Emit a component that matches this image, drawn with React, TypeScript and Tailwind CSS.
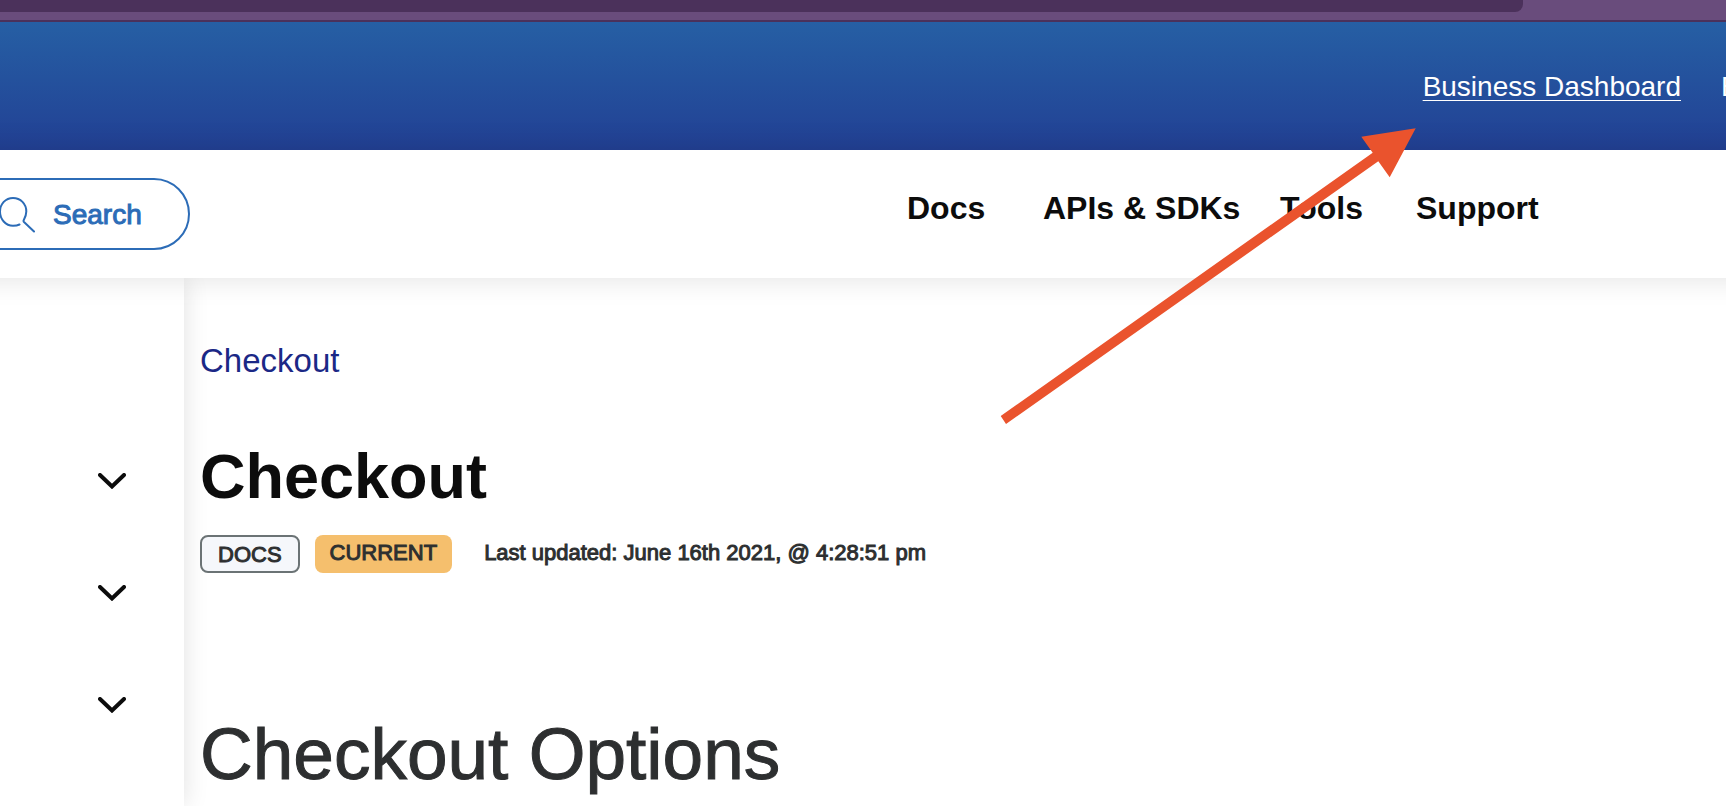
import React from 'react';

interface NavItem {
  label: string;
  width: string;
}

const navItems: NavItem[] = [
  { label: 'Docs', width: 'w-[136px]' },
  { label: 'APIs & SDKs', width: 'w-[237px]' },
  { label: 'Tools', width: 'w-[136px]' },
  { label: 'Support', width: 'w-[124px]' },
];

const sections = ['Section one', 'Section two', 'Section three'];

function SearchIcon() {
  return (
    <svg
      width="36"
      height="38"
      viewBox="0 0 36 38"
      fill="none"
      stroke="currentColor"
      strokeWidth="2"
      strokeLinecap="round"
      strokeLinejoin="round"
      className="shrink-0 overflow-visible"
      aria-hidden="true"
    >
      <path d="M18.5 28.5C16.7 29.4 14.5 29.8 12 29.8C4.5 29.8 -1 23 -1 15.7C-1 7.9 4.6 2 12 2C19.6 2 25.3 7.9 25.3 15.5C25.3 19 24.2 21.5 22.7 24.2C22.4 25 22.5 25.5 23 26L33 35.5" />
    </svg>
  );
}

function Chevron() {
  return (
    <svg
      width="28"
      height="16"
      viewBox="0 0 28 16"
      fill="none"
      stroke="currentColor"
      strokeWidth="4"
      strokeLinecap="round"
      aria-hidden="true"
    >
      <path d="M2 2L14 13.5L26 2" />
    </svg>
  );
}

function Arrow() {
  return (
    <svg
      width="416"
      height="297"
      viewBox="0 0 416 297"
      className="absolute left-[1000px] top-[128px] z-20 pointer-events-none"
      aria-hidden="true"
    >
      <path
        d="M0.7 288L372.7 24.7L361.3 8.7L415.7 0.3L389.7 49.3L378.3 33.3L6 296Z"
        fill="#ea532d"
      />
    </svg>
  );
}

export default function App() {
  return (
    <div className="relative flex min-h-screen flex-col overflow-hidden bg-white font-['Liberation_Sans',Arial,sans-serif] text-[#0c0c0c]">
      <div className="flex h-[22px] border-b-2 border-[#4b315b] bg-[#694c7c]">
        <div className="h-3 w-[88.25%] rounded-br-lg bg-[#4b315b]" />
      </div>

      <header className="flex h-32 items-center justify-end gap-10 bg-linear-to-b from-[#265fa4] to-[#224094] pt-0.5 text-[28px] leading-8 text-white">
        <a href="#dashboard" className="underline decoration-1 underline-offset-4">
          Business Dashboard
        </a>
        <a href="#explore" aria-label="Explore" className="w-[5px] overflow-hidden">
          E
        </a>
      </header>

      <div className="relative z-10 -mx-10 flex h-32 items-center justify-between bg-white pr-[226px] pl-10 shadow-[0_0_28px_rgba(0,0,0,0.12)]">
        <button
          type="button"
          className="-ml-9 flex h-[72px] w-[226px] items-center gap-4 rounded-full border-2 border-[#2c6cb7] pt-0.5 pl-[35px] text-[28px] leading-8 text-[#2c6cb7] [-webkit-text-stroke:1px]"
        >
          <SearchIcon />
          Search
        </button>
        <nav className="flex pb-3 text-[32px] leading-9 font-bold">
          {navItems.map((item) => (
            <a key={item.label} href="#nav" className={item.width}>
              {item.label}
            </a>
          ))}
        </nav>
      </div>

      <div className="flex grow">
        <aside className="flex w-[184px] flex-col items-end gap-24 bg-white pt-[195px] pr-[58px] shadow-[0_0_24px_rgba(0,0,0,0.12)]">
          {sections.map((section) => (
            <button key={section} type="button" aria-label={section}>
              <Chevron />
            </button>
          ))}
        </aside>

        <main className="grow pl-4">
          <a href="#checkout" className="mt-[63px] block text-[33px] leading-10 text-[#1b2886]">
            Checkout
          </a>
          <h1 className="mt-[59px] text-[63px] leading-[72px] font-bold">Checkout</h1>
          <div className="mt-[23px] flex h-[38px] text-[22px] leading-9 text-[#2d2f30] [-webkit-text-stroke:1px]">
            <span className="rounded-lg border-2 border-[#6b7375] bg-[#f5f7fb] px-4">DOCS</span>
            <span className="ml-[15px] rounded-lg bg-[#f5bf6d] px-[15px]">CURRENT</span>
            <span className="ml-8">Last updated: June 16th 2021, @ 4:28:51 pm</span>
          </div>
          <h2 className="mt-[139px] text-[73px] leading-[84px] text-[#2d2f30] [-webkit-text-stroke:1px]">
            Checkout Options
          </h2>
        </main>
      </div>

      <Arrow />
    </div>
  );
}
